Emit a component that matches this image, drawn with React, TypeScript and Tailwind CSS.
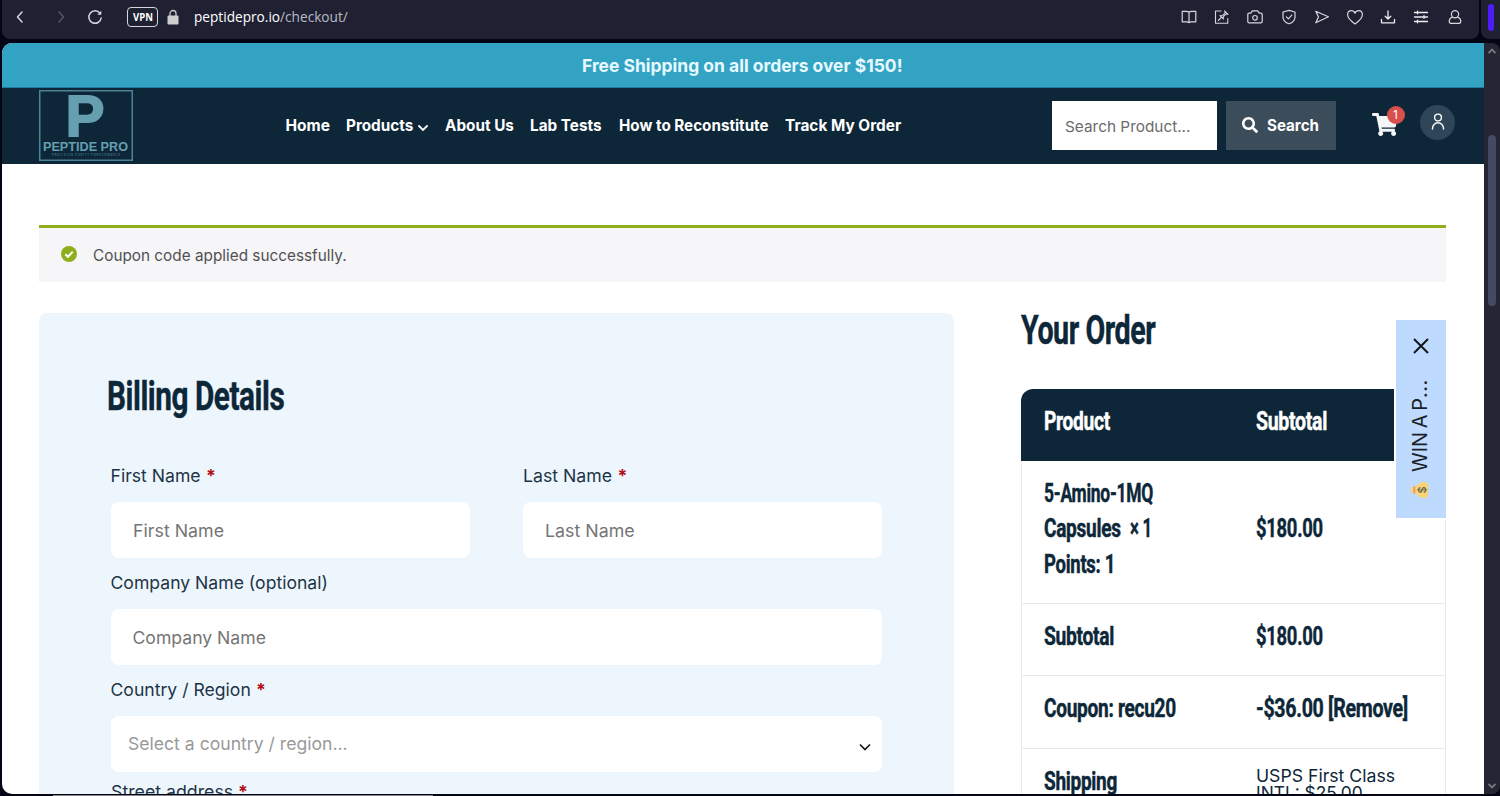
import { useLayoutEffect, useRef, useState } from "react";
import type { ReactNode } from "react";
import { FaSearch, FaShoppingCart } from "react-icons/fa";

/** Single line of text stretched or condensed horizontally to a given width. */
function Fit({ w, className = "", children }: { w: number; className?: string; children: ReactNode }) {
  const ref = useRef<HTMLSpanElement>(null);
  const [scale, setScale] = useState(1);
  useLayoutEffect(() => {
    if (ref.current) setScale(w / ref.current.offsetWidth);
  }, [w]);
  return (
    <span className={`inline-block shrink-0 whitespace-nowrap ${className}`} style={{ width: w }}>
      <span ref={ref} className="inline-block origin-left" style={{ transform: `scaleX(${scale})` }}>
        {children}
      </span>
    </span>
  );
}

const display = "font-['Roboto',sans-serif] font-bold tracking-[-0.015em] [-webkit-text-stroke:0.45px_currentColor]";

function Icon({ children, className = "" }: { children: ReactNode; className?: string }) {
  return (
    <svg
      viewBox="0 0 16 16"
      className={`size-4 shrink-0 ${className}`}
      fill="none"
      stroke="currentColor"
      strokeWidth="1.2"
      strokeLinecap="round"
      strokeLinejoin="round"
    >
      {children}
    </svg>
  );
}

function BrowserBar() {
  return (
    <div className="flex h-[43px] shrink-0 items-start justify-between">
      <div className="ml-[2px] flex h-[39px] w-[1477px] items-center rounded-b-lg bg-[#1f2132] pb-[5px] text-[#d5d6de]">
        <Icon className="ml-[10px]"><path d="M10 3 5.500 8l4.500 5" strokeWidth="1.500" /></Icon>
        <Icon className="ml-[25px] text-[#54566a]"><path d="M6 3l4.500 5L6 13" strokeWidth="1.500" /></Icon>
        <Icon className="ml-[18px]">
          <path d="M13 4.300A6.200 6.200 0 1 0 14.200 9" strokeWidth="1.500" />
          <path d="M14.300 1.800v4h-4z" fill="currentColor" stroke="none" />
        </Icon>
        <span className="ml-[24px] flex h-5 w-[31px] items-center justify-center rounded-[4px] border border-[#d5d6de]">
          <Fit w={20} className="font-['Open_Sans',sans-serif] text-[10px] leading-none font-bold text-white">VPN</Fit>
        </span>
        <svg viewBox="0 0 12 16" className="mt-[-1px] ml-[9px] h-4 w-3" fill="none">
          <path d="M3 8V4.500a3 3 0 0 1 6 0V8" stroke="#c9cacc" strokeWidth="1.300" />
          <rect x="0.500" y="6.500" width="11" height="9" rx="1.200" fill="#cfcfcf" />
        </svg>
        <Fit w={154} className="mt-[-1px] ml-[15px] font-['Open_Sans',sans-serif] text-[14px] text-[#b9bac6]">
          <span className="text-white">peptidepro.io</span>/checkout/
        </Fit>
        <div className="ml-auto mr-[16.500px] flex items-center gap-[17.200px]">
          <Icon>
            <path d="M8 3.200v10.500M8 3.200C7.200 2.600 6.500 2.400 5.500 2.400H1.200v10.400h4.600c1 0 1.600.3 2.200.9.600-.6 1.200-.9 2.200-.9h4.600V2.400h-4.300c-1 0-1.700.2-2.500.8z" />
          </Icon>
          <Icon>
            <path d="M7 2H1.500v12.300h12.300V9.500M4.300 11.500l3.300-3.300M6 6.500l3.500 3.500M6.500 7c1.800 0 2.800-.5 3.800-2.200L11.500 3M9 9.500c0-1.800.5-2.800 2.200-3.800L13 4.500M10.500 2l3.500 3.500" strokeWidth="1.100" />
          </Icon>
          <Icon>
            <path d="M.8 5.400c0-.8.5-1.300 1.300-1.300h1.700l1.500-2.200h5.400l1.500 2.200h1.700c.8 0 1.300.5 1.300 1.300v7.100c0 .8-.5 1.300-1.300 1.300H2.100c-.8 0-1.300-.5-1.300-1.300z" />
            <circle cx="8" cy="8.800" r="2.300" />
          </Icon>
          <Icon>
            <path d="M8 1.400 14 3v5c0 3.400-2.600 5.700-6 6.800C4.600 13.700 2 11.400 2 8V3z" />
            <path d="M5.400 7.800l2 2 3.400-3.600" />
          </Icon>
          <Icon><path d="M1.800 2.200 14.400 7.800 1.800 13.800 4.500 8z" /></Icon>
          <Icon>
            <path d="M8 15C4.800 12.700.6 9.600.6 5.800.6 3.400 2.300 1.700 4.300 1.700 6 1.700 7.400 2.700 8 4.200c.6-1.500 2-2.500 3.700-2.500 2 0 3.700 1.700 3.700 4.100 0 3.800-4.200 6.900-7.400 9.200z" />
          </Icon>
          <Icon className="text-[#ececf0]"><path d="M8 2v7.500M5.200 7.200 8 10l2.800-2.800M1.500 10.500v3.300h13v-3.300" strokeWidth="1.300" /></Icon>
          <Icon className="text-[#ececf0]">
            <path d="M1.500 3.500h13M1.500 8h13M1.500 12.500h13M4.500 2.200v2.600M11 6.700v2.600M4.500 11.200v2.600" strokeWidth="1.300" />
          </Icon>
          <Icon>
            <circle cx="8" cy="5.200" r="3.600" />
            <path d="M5.500 8C3.200 8.800 2.200 10.600 2.200 12.200c0 1.300.8 2.200 2.300 2.200h7c1.500 0 2.300-.9 2.300-2.200 0-1.600-1-3.400-3.300-4.200" />
          </Icon>
        </div>
      </div>
      <div className="flex h-[39px] w-[19px] justify-center rounded-bl-lg bg-[#1f2132] pt-1">
        <span className="h-[27px] w-[6px] rounded-full bg-[#4c1dfa]" />
      </div>
    </div>
  );
}

function Logo() {
  return (
    <svg viewBox="0 0 94 71" className="mt-[-1px] h-[71px] w-[94px] shrink-0">
      <rect x="0.750" y="0.750" width="92.500" height="69.500" fill="none" stroke="#4b8496" strokeWidth="1.500" />
      <g fill="#659fb0" fontFamily="Liberation Sans, Arial, sans-serif" fontWeight="700">
        <text x="26.500" y="45.500" fontSize="58" textLength="39" lengthAdjust="spacingAndGlyphs" stroke="#659fb0" strokeWidth="1.800">P</text>
        <text x="4" y="61" fontSize="13" textLength="85" lengthAdjust="spacingAndGlyphs">PEPTIDE PRO</text>
        <text x="13" y="65.500" fontSize="2.600" textLength="68" fillOpacity="0.600">PRECISION PURITY PERFORMANCE</text>
      </g>
    </svg>
  );
}

function NavItem({ w, children }: { w: number; children: string }) {
  return <Fit w={w} className="text-[15.500px] font-bold text-white">{children}</Fit>;
}

function Header() {
  return (
    <header className="flex h-[76px] shrink-0 items-center bg-[#0d2739] pl-[37px]">
      <Logo />
      <nav className="ml-[152.500px] flex w-[617px] items-center gap-[16.600px]">
        <NavItem w={44}>Home</NavItem>
        <span className="flex items-center">
          <NavItem w={67}>Products</NavItem>
          <svg viewBox="0 0 10 8" className="ml-[5px] mt-[4px] h-2 w-[10px]" fill="none" stroke="white" strokeWidth="1.800" strokeLinecap="round">
            <path d="M1 2l4 4 4-4" />
          </svg>
        </span>
        <NavItem w={69}>About Us</NavItem>
        <NavItem w={72}>Lab Tests</NavItem>
        <NavItem w={150}>How to Reconstitute</NavItem>
        <NavItem w={116}>Track My Order</NavItem>
      </nav>
      <div className="mt-[-1px] ml-[149.500px] flex h-[49px] w-[165px] items-center bg-white pl-[13px] pt-[3px]">
        <Fit w={125} className="text-[15px] text-[#6b6b6b]">Search Product...</Fit>
      </div>
      <div className="mt-[-1px] ml-[9px] flex h-[49px] w-[110px] items-center bg-[#3b4c5b] pl-[16px] text-white">
        <FaSearch className="mt-[-1px] size-4" />
        <Fit w={52} className="mt-[-1px] ml-[8.500px] text-[16px] font-bold">Search</Fit>
      </div>
      <div className="relative ml-[36px] mt-[-4px] h-[36px] w-[34px]">
        <FaShoppingCart className="mt-[7px] h-[23px] w-[26px] text-[#f4f6f8]" />
        <span className="absolute top-0 left-[14.500px] flex size-[18px] items-center justify-center rounded-full bg-[#d94f4c] text-[12px] text-white">1</span>
      </div>
      <div className="mt-[-8px] ml-[14px] flex size-[35px] items-center justify-center rounded-full bg-[#2e4657]">
        <svg viewBox="0 0 14 18" className="h-[18px] w-[14px]" fill="none" stroke="white" strokeWidth="1.400" strokeLinecap="round">
          <circle cx="7" cy="4.500" r="3.400" />
          <path d="M1.500 16v-.7a5.500 5.500 0 0 1 11 0v.7" />
        </svg>
      </div>
    </header>
  );
}

function Notice() {
  return (
    <div className="flex h-[57px] shrink-0 items-center border-t-[3px] border-[#8fae1b] bg-[#f6f5f8] pl-[22px]">
      <svg viewBox="0 0 16 16" className="mt-[-2px] size-4">
        <circle cx="8" cy="8" r="8" fill="#8fae1b" />
        <path d="M4.300 8.300l2.600 2.500 4.800-5" stroke="white" strokeWidth="2" fill="none" />
      </svg>
      <Fit w={254} className="mt-[2px] ml-[15.500px] text-[15.500px] text-[#515151]">Coupon code applied successfully.</Fit>
    </div>
  );
}

function Label({ w, required, children }: { w: number; required?: boolean; children: string }) {
  return (
    <label className="-ml-[0.500px] flex h-[51px] items-center text-[17.600px] text-[#1d3446]">
      <Fit w={w}>{children}</Fit>
      {required && <span className="ml-[5.500px] font-bold text-[#b30d14]">*</span>}
    </label>
  );
}

function Field({ w, children }: { w: number; children: string }) {
  return (
    <div className="flex h-[56px] items-center rounded-lg bg-white pl-[21.500px] pt-[2px] text-[17.600px] text-[#757575]">
      <Fit w={w}>{children}</Fit>
    </div>
  );
}

function Billing() {
  return (
    <section className="h-[600px] w-[915px] rounded-t-lg bg-[#eef6fd] pt-[58px] pl-[72px]">
      <h2 className={`ml-[-4px] h-[50px] text-[41px] leading-[50px] text-[#0d2739] ${display}`}>
        <Fit w={177}>Billing Details</Fit>
      </h2>
      <div className="mt-[30px] w-[771px]">
        <div className="grid grid-cols-2 gap-[53px]">
          <div>
            <Label w={90} required>First Name</Label>
            <Field w={91}>First Name</Field>
          </div>
          <div>
            <Label w={89.500} required>Last Name</Label>
            <Field w={90}>Last Name</Field>
          </div>
        </div>
        <Label w={217}>Company Name (optional)</Label>
        <Field w={133}>Company Name</Field>
        <Label w={140} required>Country / Region</Label>
        <div className="flex h-[56px] items-center justify-between rounded-lg bg-white pr-[11px] pl-[17px] text-[17.600px] text-[#999]">
          <Fit w={220}>Select a country / region...</Fit>
          <svg viewBox="0 0 12 8" className="mt-[5px] h-2 w-3" fill="none" stroke="#16191d" strokeWidth="1.700">
            <path d="M1 1.500l5 5 5-5" />
          </svg>
        </div>
        <div className="mt-[-5px]">
          <Label w={122} required>Street address</Label>
        </div>
      </div>
    </section>
  );
}

function Row({ height, children }: { height: string; children: ReactNode }) {
  return (
    <div className={`grid grid-cols-[212px_1fr] border-b border-[#e9e9ea] pl-[22px] text-[25px] leading-[35.300px] text-[#0d2739] ${height} ${display}`}>
      {children}
    </div>
  );
}

function Order() {
  return (
    <section className="ml-[67px] w-[425px]">
      <h2 className={`mt-[-8px] h-[50px] text-[41px] leading-[50px] text-[#0d2739] ${display}`}>
        <Fit w={134}>Your Order</Fit>
      </h2>
      <div className="mt-[34px] w-[425px]">
        <div className={`grid h-[72px] grid-cols-[212px_1fr] rounded-t-xl bg-[#0d2739] pt-[15px] pl-[23px] text-[25px] leading-[35.300px] text-white ${display}`}>
          <Fit w={66}>Product</Fit>
          <Fit w={71}>Subtotal</Fit>
        </div>
        <div className="border-x border-[#e9e9ea]">
          <Row height="h-[143px] pt-[15px]">
            <div>
              <Fit w={109}>5-Amino-1MQ</Fit>
              <div className="flex">
                <Fit w={77}>Capsules</Fit>
                <Fit w={22} className="ml-[9px]">× 1</Fit>
              </div>
              <Fit w={71}>Points: 1</Fit>
            </div>
            <div className="pt-[35.300px]"><Fit w={67}>$180.00</Fit></div>
          </Row>
          <Row height="h-[72px] pt-[15px]">
            <Fit w={70}>Subtotal</Fit>
            <Fit w={67}>$180.00</Fit>
          </Row>
          <Row height="h-[73px] pt-[15px]">
            <Fit w={132}>Coupon: recu20</Fit>
            <Fit w={152}>-$36.00 [Remove]</Fit>
          </Row>
          <Row height="h-[100px] pt-[15px]">
            <Fit w={73}>Shipping</Fit>
            <div className="mt-[4px] flex flex-col font-['Inter',sans-serif] text-[17px] leading-[17px] font-normal tracking-normal [-webkit-text-stroke:0]">
              <Fit w={139}>USPS First Class</Fit>
              <Fit w={107}>INTL: $25.00</Fit>
            </div>
          </Row>
        </div>
      </div>
    </section>
  );
}

function PromoTab() {
  return (
    <aside className="absolute top-[274.500px] left-[1392px] h-[202px] w-[52px] border-2 border-r-0 border-white bg-[#bedbff]">
      <div className="absolute top-[74px] left-[-74px] flex h-[50px] w-[198px] -rotate-90 items-center text-[20px] text-[#1b1f26]">
        <svg viewBox="0 0 18 20" className="mt-[-4px] ml-[19px] h-5 w-[18px]">
          <path d="M6 6h6c3 2.500 5 6 5 9 0 3.500-2.500 4.500-8 4.500S1 18.500 1 15c0-3 2-6.500 5-9z" fill="#fbd377" />
          <path d="M5.500 1.500 8 2.500l1-1.500 1 1.500 2.500-1-1.500 4H7z" fill="#fbd377" />
          <path d="M5.500 5.300h7" stroke="#e39a63" strokeWidth="2" />
          <text x="9" y="17" textAnchor="middle" fontSize="11" fill="#5f6650" fontWeight="500" fontFamily="Inter, sans-serif">$</text>
        </svg>
        <Fit w={93} className="mt-[-2px] ml-[9px] [word-spacing:-2px]">WIN A P<span className="tracking-[0.500px]">...</span></Fit>
        <svg viewBox="0 0 16 16" className="ml-[25px] size-4" stroke="#14181d" strokeWidth="2">
          <path d="M1 1l14 14M15 1 1 15" />
        </svg>
      </div>
    </aside>
  );
}

export default function App() {
  return (
    <div className="flex h-[796px] w-[1500px] flex-col overflow-hidden bg-[#030414] font-['Inter',sans-serif]">
      <BrowserBar />
      <div className="flex h-[751px] shrink-0 pl-[2px]">
        <main className="relative flex w-[1482px] flex-col overflow-hidden rounded-l-[10px] bg-white">
          <div className="flex h-[45px] shrink-0 items-center justify-center border-b border-[#1f7b9b] bg-[#33a3c3] pt-px">
            <Fit w={321} className="ml-[-1px] text-[18px] font-bold text-[#e6f9ff]">Free Shipping on all orders over $150!</Fit>
          </div>
          <Header />
          <div className="flex flex-col pr-[38px] pl-[37px] pt-[61px]">
            <Notice />
            <div className="mt-[31px] flex">
              <Billing />
              <Order />
            </div>
          </div>
          <PromoTab />
        </main>
        <div className="flex w-4 flex-col items-center rounded-r-lg bg-[#252633] pt-[5px]">
          <svg viewBox="0 0 8 6" className="h-[6px] w-2" fill="none" stroke="#77777d" strokeWidth="1.800"><path d="M0.500 5 4 1.500 7.500 5" /></svg>
          <div className="mt-[81px] h-[171px] w-2 rounded-full bg-[#454a63]" />
          <svg viewBox="0 0 8 6" className="mt-auto mb-[5px] h-[6px] w-2" fill="none" stroke="#77777d" strokeWidth="1.800"><path d="M0.500 1 4 4.500 7.500 1" /></svg>
        </div>
      </div>
      <div className="mt-px ml-[53px] h-px w-[380px] bg-[#85858b]" />
    </div>
  );
}
